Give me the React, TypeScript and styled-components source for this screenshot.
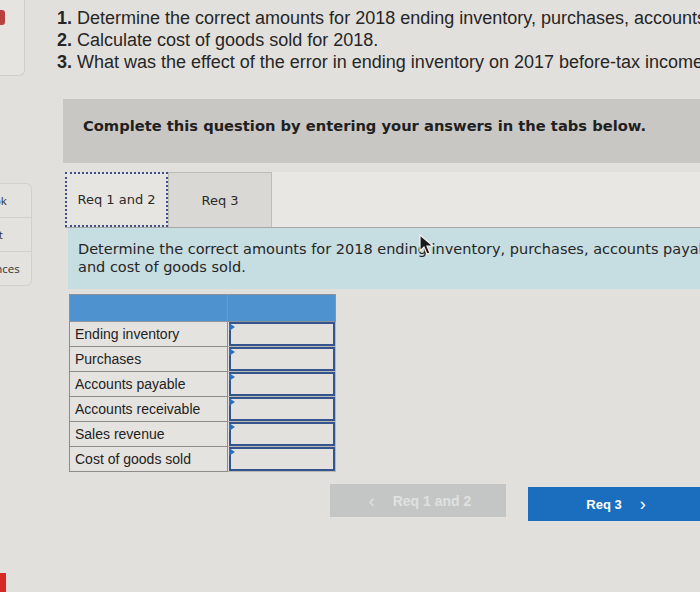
import React from "react";
import styled, { createGlobalStyle } from "styled-components";

const GlobalStyle = createGlobalStyle`
  html, body {
    margin: 0;
    padding: 0;
    background: #e2e0dc;
    overflow: hidden;
  }
  body {
    font-family: "Liberation Sans", Arial, sans-serif;
    color: #232323;
  }
`;

const rows = [
  "Ending inventory",
  "Purchases",
  "Accounts payable",
  "Accounts receivable",
  "Sales revenue",
  "Cost of goods sold",
];

function App() {
  return (
    <>
      <GlobalStyle />
      <Page>
        <Sidebar>
          <TopCard>
            <RedMark />
          </TopCard>
          <NavGroup>
            <NavItem>
              <span>eBook</span>
            </NavItem>
            <NavItem>
              <span>Print</span>
            </NavItem>
            <NavItem>
              <span>References</span>
            </NavItem>
          </NavGroup>
          <CornerBadge />
        </Sidebar>

        <Main>
          <Tasks>
            <li>
              <b>1.</b> Determine the correct amounts for 2018 ending inventory, purchases, accounts payable, accounts receivable
            </li>
            <li>
              <b>2.</b> Calculate cost of goods sold for 2018.
            </li>
            <li>
              <b>3.</b> What was the effect of the error in ending inventory on 2017 before-tax income?
            </li>
          </Tasks>

          <Instructions>Complete this question by entering your answers in the tabs below.</Instructions>

          <TabBar>
            <Tab $active>Req 1 and 2</Tab>
            <Tab>Req 3</Tab>
          </TabBar>

          <Pane>
            Determine the correct amounts for 2018 ending inventory, purchases, accounts payable, accounts receivable, sales revenue,
            <br />
            and cost of goods sold.
          </Pane>

          <AnswerTable>
            <thead>
              <tr>
                <HeadCell $w={157} />
                <HeadCell $w={107} />
              </tr>
            </thead>
            <tbody>
              {rows.map((label) => (
                <tr key={label}>
                  <LabelCell>{label}</LabelCell>
                  <InputCell>
                    <AmountInput aria-label={label} />
                  </InputCell>
                </tr>
              ))}
            </tbody>
          </AnswerTable>

          <NavButtons>
            <PrevButton disabled>
              <Chevron>‹</Chevron>Req 1 and 2
            </PrevButton>
            <NextButton>
              Req 3<Chevron>›</Chevron>
            </NextButton>
          </NavButtons>

          <Cursor width="18" height="22" viewBox="0 0 18 22">
            <path d="M2 1 L2 17 L6 13 L9 20 L12 19 L9 12 L15 12 Z" fill="#1a1a1a" stroke="#f2f2f2" strokeWidth="1.2" />
          </Cursor>
        </Main>
      </Page>
    </>
  );
}

export default App;

const Page = styled.div`
  display: flex;
  width: 700px;
  height: 592px;
  overflow: hidden;
`;

const Sidebar = styled.div`
  display: flex;
  flex-direction: column;
  width: 33px;
  flex-shrink: 0;
`;

const TopCard = styled.div`
  width: 25px;
  height: 76px;
  box-sizing: border-box;
  background: #e6e4e1;
  border: 1px solid #d0cecb;
  border-left: none;
  border-top: none;
  border-bottom-right-radius: 6px;
  overflow: hidden;
  padding-top: 10px;
`;

const RedMark = styled.div`
  width: 5px;
  height: 15px;
  background: #b84040;
  border-radius: 0 3px 3px 0;
`;

const NavGroup = styled.div`
  margin-top: 107px;
  width: 32px;
  box-sizing: border-box;
  border: 1px solid #d2d0cc;
  border-left: none;
  border-radius: 0 6px 6px 0;
  background: #e4e2df;
  overflow: hidden;
`;

/* labels are centred in a wider slot that sits mostly off the left edge */
const NavItem = styled.div`
  height: 33px;
  width: 84px;
  margin-left: -52px;
  display: flex;
  align-items: center;
  justify-content: center;
  white-space: nowrap;
  font-family: "Open Sans", "DejaVu Sans", sans-serif;
  font-size: 11.5px;
  color: #333;
  & + & {
    border-top: 1px solid #d2d0cc;
  }
`;

const CornerBadge = styled.div`
  margin-top: auto;
  width: 6px;
  height: 19px;
  background: #d52a26;
`;

const Main = styled.div`
  position: relative;
  flex: 1;
  min-width: 0;
  padding-left: 32px;
`;

const Tasks = styled.ol`
  list-style: none;
  margin: 0 0 0 -8px;
  padding: 7px 0 0;
  font-size: 18px;
  line-height: 22px;
  color: #262626;
  white-space: nowrap;
  li b {
    font-weight: 700;
  }
`;

const Instructions = styled.div`
  margin: 26px 0 0 -2px;
  height: 64px;
  box-sizing: border-box;
  padding: 18px 0 0 20px;
  background: #c9c7c4;
  font-family: "DejaVu Sans", Verdana, sans-serif;
  font-weight: 700;
  font-size: 14.7px;
  line-height: 18px;
  color: #202020;
  white-space: nowrap;
`;

const TabBar = styled.div`
  display: flex;
  margin-top: 9px;
  height: 55px;
  background: #e9e7e3;
  border-bottom: 1px solid #a9a7a4;
`;

const Tab = styled.div<{ $active?: boolean }>`
  width: ${(p) => (p.$active ? 103 : 104)}px;
  box-sizing: border-box;
  display: flex;
  align-items: center;
  justify-content: center;
  font-family: "DejaVu Sans", Verdana, sans-serif;
  font-size: 13px;
  color: #2a2a2a;
  background: ${(p) => (p.$active ? "#e7e5e2" : "#dad8d4")};
  border: ${(p) => (p.$active ? "2px dotted #3d4f86" : "1px solid #bebcb8")};
  border-bottom: ${(p) => (p.$active ? "2px dotted #3d4f86" : "none")};
`;

const Pane = styled.div`
  margin-left: 3px;
  padding: 12px 0 13px 10px;
  background: #c6dde1;
  font-family: "DejaVu Sans", Verdana, sans-serif;
  font-size: 14.5px;
  line-height: 18px;
  color: #262626;
  white-space: nowrap;
  overflow: hidden;
`;

const AnswerTable = styled.table`
  margin: 5px 0 0 4px;
  border-collapse: collapse;
  table-layout: fixed;
`;

const HeadCell = styled.th<{ $w: number }>`
  width: ${(p) => p.$w}px;
  height: 26px;
  padding: 0;
  background: #4e93cf;
  border: 1px solid #8c9299;
`;

const LabelCell = styled.td`
  height: 24px;
  padding: 0 0 0 5px;
  background: #e5e3e0;
  border: 1px solid #8d8c8a;
  font-size: 14px;
  color: #222;
  white-space: nowrap;
`;

const InputCell = styled.td`
  position: relative;
  padding: 0 0 0 1px;
  border: 1px solid #bab8b5;
  background: #e4e2df;
  &::before {
    content: "";
    position: absolute;
    left: 1px;
    top: 1px;
    border-left: 6px solid #2b6fc0;
    border-top: 4px solid transparent;
    border-bottom: 4px solid transparent;
  }
`;

const AmountInput = styled.input`
  display: block;
  width: 100%;
  height: 24px;
  box-sizing: border-box;
  border: 2px solid #34548d;
  background: #e3e1de;
  outline: none;
`;

const NavButtons = styled.div`
  display: flex;
  align-items: flex-start;
  gap: 22px;
  margin: 12px 0 0 265px;
`;

const Chevron = styled.span`
  font-size: 18px;
  font-weight: 400;
  margin: 0 18px;
  line-height: 1;
`;

const PrevButton = styled.button`
  width: 176px;
  height: 33px;
  flex-shrink: 0;
  border: none;
  background: #c4c6c6;
  color: #dfe1e1;
  font-family: "Liberation Sans", Arial, sans-serif;
  font-weight: 700;
  font-size: 14px;
  display: flex;
  align-items: center;
  justify-content: center;
  padding: 0 14px 0 0;
`;

const NextButton = styled.button`
  width: 176px;
  height: 34px;
  margin-top: 3px;
  flex-shrink: 0;
  border: none;
  background: #1b6ebe;
  color: #fff;
  font-family: "Liberation Sans", Arial, sans-serif;
  font-weight: 700;
  font-size: 13px;
  display: flex;
  align-items: center;
  justify-content: center;
  padding: 0 0 0 18px;
  cursor: pointer;
`;

const Cursor = styled.svg`
  position: absolute;
  left: 385px;
  top: 234px;
`;
